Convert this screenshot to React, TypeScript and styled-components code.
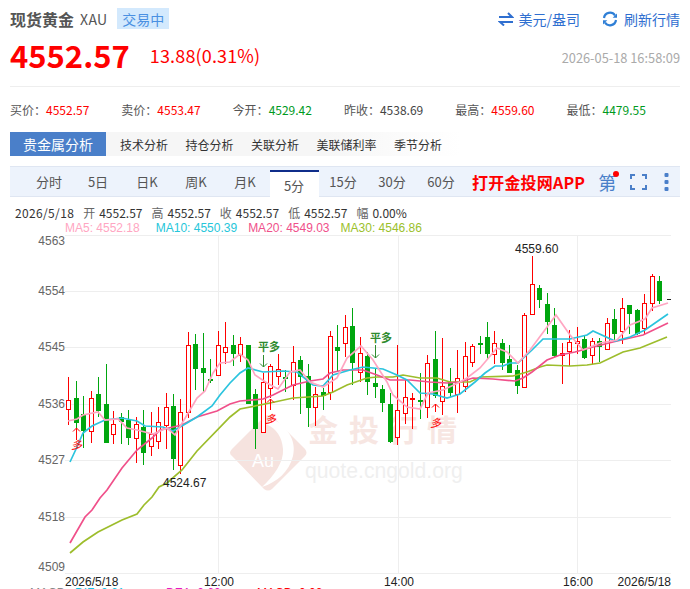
import React from "react";
import styled, { createGlobalStyle } from "styled-components";

const GlobalStyle = createGlobalStyle`
  html, body {
    margin: 0;
    padding: 0;
    background: #fff;
    overflow: hidden;
  }
`;

const UI_FONT = `"Noto Sans CJK SC", "Noto Sans", sans-serif`;
const ARIAL = `"Liberation Sans", Arial, sans-serif`;
const RED = "#ff0000";
const GREEN = "#009a1e";
const BLUE = "#2f6fd0";

const Page = styled.div`
  width: 690px;
  height: 589px;
  overflow: hidden;
  font-family: ${UI_FONT};
  color: #333;
`;

const TitleRow = styled.div`
  display: flex;
  align-items: center;
  height: 21px;
  padding: 8px 10px 0;
`;

const TitleName = styled.span`
  font-size: 16px;
  font-weight: 700;
  color: #555;
`;

const TitleCode = styled.span`
  font-size: 14px;
  letter-spacing: 0.3px;
  color: #555;
  margin-left: 6px;
`;

const StatusBadge = styled.span`
  display: flex;
  align-items: center;
  justify-content: center;
  width: 52px;
  height: 21px;
  margin-left: 10px;
  background: #d3e9fd;
  color: #4a90e2;
  font-size: 14px;
`;

const TitleActions = styled.div`
  display: flex;
  align-items: center;
  margin-left: auto;
  gap: 22px;
`;

const ActionLink = styled.a<{ $gap: number }>`
  display: flex;
  align-items: center;
  gap: ${(p) => p.$gap}px;
  font-size: 14px;
  color: ${BLUE};
`;

const PriceRow = styled.div`
  display: flex;
  align-items: center;
  height: 36px;
  margin: 10px 10px 0;
  padding-bottom: 11px;
  border-bottom: 1px solid #eee;
`;

const LastPrice = styled.span`
  font-size: 31px;
  font-weight: 700;
  margin-bottom: 5px;
  color: ${RED};
`;

const PriceChange = styled.span`
  font-size: 18px;
  letter-spacing: 0.15px;
  color: ${RED};
  margin: 0 0 4px 20px;
`;

const Timestamp = styled.span`
  margin-left: auto;
  font-size: 12.8px;
  color: #aaa;
`;

const StatsRow = styled.div`
  display: grid;
  grid-template-columns: repeat(6, 111.3px);
  height: 45px;
  padding: 0 10px;
  align-items: center;
  font-size: 12px;
  color: #555;
`;

const StatValue = styled.span<{ $color: string }>`
  color: ${(p) => p.$color};
`;

const AnalysisTabs = styled.div`
  display: flex;
  align-items: center;
  height: 24px;
  width: 450px;
  margin-left: 10px;
  gap: 17.5px;
  background: linear-gradient(to right, #f6f6f6 70%, #fff);
  font-size: 12px;
  color: #333;
`;

const AnalysisTabActive = styled.span`
  display: flex;
  align-items: center;
  justify-content: center;
  width: 96px;
  height: 24px;
  margin-right: -3.5px;
  background: #4a7fc9;
  color: #fff;
  font-size: 14px;
`;

const PeriodBar = styled.div`
  display: flex;
  align-items: stretch;
  height: 29px;
  margin: 10px 10px 0;
  padding-left: 14.5px;
  background: #edf3fc;
  border-top: 1px solid #dfe6f2;
  border-bottom: 1px solid #dfe6f2;
  font-size: 13px;
  color: #555;
`;

const PeriodItem = styled.span<{ $active?: boolean }>`
  display: flex;
  align-items: center;
  justify-content: center;
  width: 49px;
  box-sizing: border-box;
  ${(p) =>
    p.$active
      ? `
    margin: 3px 0 -1px;
    padding-top: 1px;
    background: #fff;
    border-top: 2px solid #0f2d8a;
  `
      : ""}
`;

const AppLink = styled.span`
  display: flex;
  align-items: center;
  margin-left: 6.5px;
  font-size: 16px;
  letter-spacing: 0.2px;
  font-weight: 700;
  color: ${RED};
  white-space: nowrap;
`;

const Notice = styled.span`
  position: relative;
  display: flex;
  align-items: center;
  margin-left: 13px;
  font-size: 18px;
  color: #4a7fc9;
`;

const NoticeDot = styled.i`
  position: absolute;
  top: 4px;
  right: -3px;
  width: 6px;
  height: 6px;
  border-radius: 50%;
  background: ${RED};
`;

const BarIcon = styled.span<{ $gap: number }>`
  display: flex;
  align-items: center;
  margin-left: ${(p) => p.$gap}px;
`;

const QuoteLine = styled.div`
  display: flex;
  align-items: center;
  height: 16px;
  margin: 7px 0 0 15px;
  font-size: 12px;
  color: #333;
  white-space: nowrap;
`;

const QuoteDate = styled.span`
  letter-spacing: 0.35px;
`;

const QuoteItem = styled.span`
  margin-left: 9px;
`;

const QuoteLabel = styled.span`
  color: #666;
  margin-right: 4px;
`;

const MaLine = styled.div`
  display: flex;
  align-items: center;
  height: 15px;
  margin-left: 65px;
  gap: 11px;
  font-family: ${ARIAL};
  font-size: 12px;
`;

const MaValue = styled.span<{ $color: string; $gap?: number }>`
  color: ${(p) => p.$color};
  margin-left: ${(p) => p.$gap ?? 0}px;
`;

const ChartSvg = styled.svg`
  display: block;
  width: 690px;
  height: 354px;
`;

const SvgText = styled.text<{ $color: string; $size?: number }>`
  font-family: ${ARIAL};
  font-size: ${(p) => p.$size ?? 12}px;
  fill: ${(p) => p.$color};
`;

const SvgCjk = styled.text<{ $color: string; $size: number; $bold?: boolean; $slant?: boolean }>`
  font-family: ${UI_FONT};
  font-size: ${(p) => p.$size}px;
  font-weight: ${(p) => (p.$bold ? 700 : 400)};
  font-style: ${(p) => (p.$slant ? "italic" : "normal")};
  fill: ${(p) => p.$color};
`;

// candles in screen px: high, body top, body bottom, low, red?
const candles: [number, number, number, number, 0 | 1][] = [
  [377, 400, 409, 425, 1], [381, 398, 423, 432, 0], [396, 414, 431, 448, 0], [391, 398, 431, 443, 1],
  [377, 394, 411, 417, 0], [364, 404, 443, 443, 0], [411, 424, 434, 444, 1], [413, 417, 422, 444, 0],
  [410, 420, 438, 445, 0], [417, 424, 438, 463, 1], [410, 427, 453, 465, 0], [412, 434, 446, 456, 1],
  [407, 422, 441, 449, 1], [393, 407, 425, 449, 1], [394, 406, 459, 470, 0], [399, 412, 465, 474, 1],
  [332, 345, 412, 418, 1], [334, 344, 369, 390, 0], [333, 368, 373, 392, 0], [359, 379, 381, 383, 0],
  [331, 345, 375, 375, 1], [322, 347, 352, 364, 1], [335, 345, 354, 366, 0], [337, 344, 355, 362, 1],
  [345, 345, 404, 404, 0], [389, 394, 429, 449, 0], [373, 382, 432, 432, 1], [364, 366, 388, 398, 1],
  [354, 369, 376, 385, 1], [370, 377, 379, 392, 0], [346, 362, 385, 400, 1], [356, 360, 377, 414, 0],
  [364, 376, 408, 427, 0], [387, 394, 407, 426, 1], [388, 392, 396, 410, 0], [331, 336, 392, 400, 1],
  [325, 347, 351, 372, 0], [315, 327, 343, 357, 1], [308, 326, 363, 385, 0], [337, 353, 372, 382, 1],
  [352, 356, 382, 395, 0], [368, 383, 387, 398, 0], [385, 389, 403, 412, 0], [393, 404, 442, 443, 0],
  [345, 410, 437, 445, 1], [380, 397, 413, 424, 1], [393, 398, 399, 429, 1], [373, 400, 401, 419, 0],
  [355, 363, 407, 418, 1], [331, 359, 396, 398, 0], [338, 386, 401, 415, 1], [368, 382, 393, 397, 0],
  [350, 378, 394, 413, 1], [342, 356, 386, 392, 1], [344, 346, 362, 367, 1], [336, 343, 344, 354, 0],
  [322, 337, 354, 360, 0], [331, 343, 354, 364, 1], [339, 343, 363, 370, 0], [345, 359, 373, 373, 0],
  [365, 370, 386, 394, 0], [313, 315, 387, 387, 1], [256, 284, 314, 314, 1], [285, 288, 300, 308, 0],
  [293, 304, 322, 334, 0], [308, 325, 356, 357, 0], [343, 353, 355, 384, 1], [330, 342, 351, 366, 1],
  [327, 341, 343, 354, 1], [335, 339, 358, 359, 0], [338, 341, 355, 364, 1], [338, 341, 347, 362, 0],
  [318, 323, 349, 349, 1], [309, 319, 334, 342, 0], [298, 308, 331, 344, 1], [305, 305, 314, 334, 0],
  [309, 310, 334, 335, 0], [294, 303, 328, 335, 1], [274, 276, 303, 311, 1], [276, 281, 301, 304, 0],
];

const ma5 = "68,421 77,419 83,415 98,412 105,420 118,419 127,428 137,430 153,434 167,428 175,435 187,415 197,398 205,391 213,373 220,363 230,362 240,354 248,360 255,375 267,383 278,389 290,372 300,370 310,382 323,387 337,378 347,358 361,346 373,360 387,382 393,395 407,407 420,409 428,393 443,390 460,382 467,378 480,368 497,348 507,352 518,363 530,350 556,315 570,335 583,350 600,343 617,340 630,325 645,319 652,308 668,303";
const ma10 = "70,462 77,447 83,433 92,426 105,420 122,418 137,421 145,426 163,427 173,431 187,423 197,417 212,406 220,395 230,383 240,373 248,368 263,372 283,371 297,372 313,385 323,386 333,375 350,370 363,367 383,369 397,375 407,380 420,393 433,394 447,398 460,394 475,382 485,373 495,366 503,366 510,363 518,363 532,350 543,339 570,339 587,335 593,331 615,341 630,337 645,330 668,314";
const ma20 = "70,543 85,517 92,510 100,498 107,490 122,468 137,450 152,438 160,430 173,427 182,425 197,417 217,411 230,404 240,401 263,399 273,395 293,385 310,381 323,379 330,373 343,370 363,370 377,375 390,380 410,380 430,382 447,383 460,382 473,378 493,379 515,381 523,378 532,372 547,360 560,355 575,352 593,347 613,342 630,338 643,335 668,323";
const ma30 = "70,553 83,542 98,532 122,520 137,514 144,505 152,497 159,487 167,483 182,470 197,451 230,417 240,409 270,403 293,398 323,396 333,392 347,385 367,378 377,377 393,377 403,375 420,378 437,378 450,382 470,382 480,377 513,376 527,372 540,367 547,365 570,366 587,365 600,363 623,352 640,348 667,337";

const gridY = [235.5, 291.5, 347.5, 404.5, 460.5, 517.5, 573.5];
const gridX = [218.5, 398.5, 577.5];
const axisLabels: [string, number][] = [
  ["4563", 245], ["4554", 295], ["4545", 351], ["4536", 408], ["4527", 464], ["4518", 521], ["4509", 571],
];

const CandleChart: React.FC = () => (
  <ChartSvg viewBox="0 235 690 354">
    {/* watermark */}
    <path d="M268 415 Q271 415 274 418 L305 449 Q308 453 305 456 L272 489 Q268 492 264 489 L232 456 Q228 453 232 449 L263 418 Q265 415 268 415 Z" fill="#f6e3df" />
    <path d="M272 419 C287 425 297 441 293 456 C289 472 277 482 262 487 C274 476 284 462 283 449 C282 437 277 429 266 424 Z" fill="#fff" />
    <SvgText x={252} y={467} $color="#fff" $size={18}>Au</SvgText>
    <SvgCjk x={308} y={441} $color="#f7e6e2" $size={30} $bold>金</SvgCjk>
    <SvgCjk x={349} y={441} $color="#f7e6e2" $size={30} $bold>投</SvgCjk>
    <SvgCjk x={388} y={441} $color="#f7e6e2" $size={30} $bold>行</SvgCjk>
    <SvgCjk x={427} y={441} $color="#f7e6e2" $size={30} $bold>情</SvgCjk>
    <SvgText x={305} y={478} $color="#efefef" $size={21.2}>quote.cngold.org</SvgText>

    {gridY.map((y) => (
      <line key={y} x1={65} x2={671} y1={y} y2={y} stroke="#eee" />
    ))}
    {gridX.map((x) => (
      <line key={x} x1={x} x2={x} y1={235} y2={574} stroke="#eee" />
    ))}
    {axisLabels.map(([t, y]) => (
      <SvgText key={t} x={65} y={y} textAnchor="end" $color="#666">{t}</SvgText>
    ))}

    {candles.map(([hi, top, bot, lo, up], i) => {
      const x = Math.round(68.3 + i * 7.477);
      const c = up ? RED : "#00a60f";
      return (
        <g key={i}>
          <rect x={x} y={hi} width={1} height={lo - hi} fill={c} />
          {up ? (
            <rect x={x - 1.5} y={top + 0.5} width={4} height={Math.max(bot - top, 1)} fill="#fff" stroke={c} />
          ) : (
            <rect x={x - 2} y={top} width={5} height={Math.max(bot - top, 2)} fill={c} />
          )}
        </g>
      );
    })}
    <line x1={667} x2={671} y1={299.5} y2={299.5} stroke="#222" />

    <polyline points={ma30} fill="none" stroke="#9dbd2c" strokeWidth={1.7} />
    <polyline points={ma20} fill="none" stroke="#f0508a" strokeWidth={1.7} />
    <polyline points={ma10} fill="none" stroke="#2bc4de" strokeWidth={1.7} />
    <polyline points={ma5} fill="none" stroke="#ffa6c2" strokeWidth={1.7} />

    <SvgText x={515} y={253} $color="#222">4559.60</SvgText>
    <SvgText x={163} y={487} $color="#222">4524.67</SvgText>

    {/* trade markers */}
    <SvgCjk x={258} y={351} $color="#2e8b2e" $size={11} $bold>平多</SvgCjk>
    <path d="M263.5 355V367M260 363.5L263.5 367L267 363.5" fill="none" stroke="#2e8b2e" />
    <SvgCjk x={370} y={342} $color="#2e8b2e" $size={11} $bold>平多</SvgCjk>
    <path d="M375.5 345V358M372 354.5L375.5 358L379 354.5" fill="none" stroke="#2e8b2e" />
    <path d="M76.5 440V428M73 431.5L76.5 428L80 431.5" fill="none" stroke={RED} />
    <SvgCjk x={71} y={449} $color={RED} $size={11} $slant>多</SvgCjk>
    <path d="M270.5 410V399M267 402.5L270.5 399L274 402.5" fill="none" stroke={RED} />
    <SvgCjk x={265} y={423} $color={RED} $size={11} $slant>多</SvgCjk>
    <path d="M435.5 412V404M432 407.5L435.5 404L439 407.5" fill="none" stroke={RED} />
    <SvgCjk x={430} y={427} $color={RED} $size={11} $slant>多</SvgCjk>

    <SvgText x={65} y={586} $color="#222">2026/5/18</SvgText>
    <SvgText x={219} y={586} textAnchor="middle" $color="#222">12:00</SvgText>
    <SvgText x={399} y={586} textAnchor="middle" $color="#222">14:00</SvgText>
    <SvgText x={578} y={586} textAnchor="middle" $color="#222">16:00</SvgText>
    <SvgText x={671} y={586} textAnchor="end" $color="#222">2026/5/18</SvgText>

    {/* next panel's legend, cut off by the window */}
    <SvgText x={30} y={597} $color="#888">MACD</SvgText>
    <SvgText x={75} y={597} $color="#19c3e6">DIF: 0.61</SvgText>
    <SvgText x={166} y={597} $color="#e619c3">DEA: 0.60</SvgText>
    <SvgText x={257} y={597} $color={RED}>MACD: 0.02</SvgText>
  </ChartSvg>
);

const SwapIcon = () => (
  <svg width="16" height="14" viewBox="0 0 16 14" fill="none" stroke={BLUE} strokeWidth="2">
    <path d="M1 5H14L10 1" />
    <path d="M15 10H2L6 13.5" />
  </svg>
);

const RefreshIcon = () => (
  <svg width="16" height="16" viewBox="0 0 16 16" fill="none">
    <path d="M2 7A6 6 0 0 1 13 4.5" stroke="#2f7fd6" strokeWidth="2.2" />
    <path d="M14 9A6 6 0 0 1 3 11.5" stroke="#2f7fd6" strokeWidth="2.2" />
    <path d="M15 2.5V6.8H10.7Z" fill="#2f7fd6" />
    <path d="M1 13.5V9.2H5.3Z" fill="#2f7fd6" />
  </svg>
);

const FullscreenIcon = () => (
  <svg width="17" height="16" viewBox="0 0 17 16" fill="none" stroke="#4a7fc9" strokeWidth="2">
    <path d="M1 5V1H5M12 1H16V5M16 11V15H12M5 15H1V11" />
  </svg>
);

const MoreIcon = () => (
  <svg width="5" height="18" viewBox="0 0 5 18" fill="#4a7fc9">
    <rect x="0.5" y="0" width="4" height="4" rx="1" />
    <rect x="0.5" y="7" width="4" height="4" rx="1" />
    <rect x="0.5" y="14" width="4" height="4" rx="1" />
  </svg>
);

const stats: [string, string, string][] = [
  ["买价", "4552.57", RED],
  ["卖价", "4553.47", RED],
  ["今开", "4529.42", GREEN],
  ["昨收", "4538.69", "#444"],
  ["最高", "4559.60", RED],
  ["最低", "4479.55", GREEN],
];

const periods = ["分时", "5日", "日K", "周K", "月K", "5分", "15分", "30分", "60分"];

const quoteItems: [string, string][] = [
  ["开", "4552.57"],
  ["高", "4552.57"],
  ["收", "4552.57"],
  ["低", "4552.57"],
  ["幅", "0.00%"],
];

const App: React.FC = () => (
  <Page>
    <GlobalStyle />
    <TitleRow>
      <TitleName>现货黄金</TitleName>
      <TitleCode>XAU</TitleCode>
      <StatusBadge>交易中</StatusBadge>
      <TitleActions>
        <ActionLink $gap={5}>
          <SwapIcon />
          美元/盎司
        </ActionLink>
        <ActionLink $gap={6}>
          <RefreshIcon />
          刷新行情
        </ActionLink>
      </TitleActions>
    </TitleRow>

    <PriceRow>
      <LastPrice>4552.57</LastPrice>
      <PriceChange>13.88(0.31%)</PriceChange>
      <Timestamp>2026-05-18 16:58:09</Timestamp>
    </PriceRow>

    <StatsRow>
      {stats.map(([label, value, color]) => (
        <span key={label}>
          {label}：<StatValue $color={color}>{value}</StatValue>
        </span>
      ))}
    </StatsRow>

    <AnalysisTabs>
      <AnalysisTabActive>贵金属分析</AnalysisTabActive>
      <span>技术分析</span>
      <span>持仓分析</span>
      <span>关联分析</span>
      <span>美联储利率</span>
      <span>季节分析</span>
    </AnalysisTabs>

    <PeriodBar>
      {periods.map((p) => (
        <PeriodItem key={p} $active={p === "5分"}>{p}</PeriodItem>
      ))}
      <AppLink>打开金投网APP</AppLink>
      <Notice>
        第
        <NoticeDot />
      </Notice>
      <BarIcon $gap={14}><FullscreenIcon /></BarIcon>
      <BarIcon $gap={17}><MoreIcon /></BarIcon>
    </PeriodBar>

    <QuoteLine>
      <QuoteDate>2026/5/18</QuoteDate>
      {quoteItems.map(([label, value]) => (
        <QuoteItem key={label}>
          <QuoteLabel>{label}</QuoteLabel>
          {value}
        </QuoteItem>
      ))}
    </QuoteLine>
    <MaLine>
      <MaValue $color="#ffa6c2">MA5: 4552.18</MaValue>
      <MaValue $color="#26c6da" $gap={5}>MA10: 4550.39</MaValue>
      <MaValue $color="#f0508a">MA20: 4549.03</MaValue>
      <MaValue $color="#9bbf2c">MA30: 4546.86</MaValue>
    </MaLine>

    <CandleChart />
  </Page>
);

export default App;
